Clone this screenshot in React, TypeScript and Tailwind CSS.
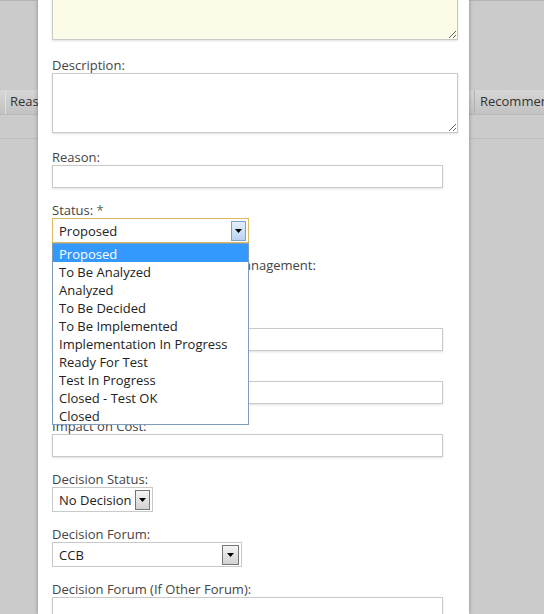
import React from 'react';

const statusOptions = [
  'Proposed',
  'To Be Analyzed',
  'Analyzed',
  'To Be Decided',
  'To Be Implemented',
  'Implementation In Progress',
  'Ready For Test',
  'Test In Progress',
  'Closed - Test OK',
  'Closed',
];

function Label({ children }: { children: React.ReactNode }) {
  return <div className="h-[17px] leading-[20px] mb-px whitespace-nowrap">{children}</div>;
}

function TextInput() {
  return (
    <div className="w-[391px] h-[23px] border border-[#c9c9c9] bg-white shadow-[0_1px_2px_rgba(0,0,0,0.12)]" />
  );
}

function Arrow({ blue, w }: { blue?: boolean; w: number }) {
  return (
    <div
      className={
        'flex items-center justify-center h-[20px] border ' +
        (blue
          ? 'bg-gradient-to-b from-[#e3eefa] to-[#b9d3ef] border-[#7fa2c8]'
          : 'bg-gradient-to-b from-[#f4f4f4] to-[#d2d2d2] border-[#757575]')
      }
      style={{ width: w }}
    >
      <svg width="7" height="4" viewBox="0 0 7 4">
        <path d="M0 0h7L3.5 4z" fill="#000" />
      </svg>
    </div>
  );
}

function Select({ value, width, arrowW, focused }: { value: string; width: number; arrowW: number; focused?: boolean }) {
  return (
    <div
      className={
        'h-[25px] flex items-center justify-between bg-white border pl-[6px] pr-[2px] ' +
        (focused ? 'border-[#deb866]' : 'border-[#c9c9c9]')
      }
      style={{ width }}
    >
      <span className="text-[#222] leading-[17px] pt-px">{value}</span>
      <Arrow blue={focused} w={arrowW} />
    </div>
  );
}

export default function App() {
  return (
    <div className="relative w-[544px] h-[614px] overflow-hidden bg-[#cbcbcb] text-[13px] text-[#444]" style={{ fontFamily: '"Open Sans", "Noto Sans", sans-serif' }}>
      {/* page behind the dialog */}
      <div className="h-[2px] border-t border-[#b3b3b3]" />
      <div className="mt-[88px] h-[25px] flex items-center justify-between bg-gradient-to-b from-[#d6d6d6] to-[#c2c2c2] border-b border-[#b9b9b9] text-[#333]">
        <div className="h-full flex items-center border-l border-[#e0e0e0] ml-[5px] pl-[4px]">Reas</div>
        <div className="h-full flex items-center border-l border-[#b0b0b0] pl-[5px] w-[70px] whitespace-nowrap overflow-hidden">Recommendation</div>
      </div>
      <div className="mt-[23px] border-t border-[#bdbdbd]" />

      {/* dialog */}
      <div className="absolute top-0 left-[38px] w-[431px] h-[614px] bg-white shadow-[0_0_4px_rgba(0,0,0,0.35)] pl-[14px]">
        <textarea className="block -mt-[20px] w-[406px] h-[60px] border border-[#c9c9c9] bg-[#fbfbe8] mb-[15px] shadow-[0_1px_2px_rgba(0,0,0,0.12)]" />

        <Label>Description:</Label>
        <textarea className="block w-[406px] h-[60px] border border-[#c9c9c9] bg-white mb-[14px] shadow-[0_1px_2px_rgba(0,0,0,0.12)]" />

        <div className="mb-3">
          <Label>Reason:</Label>
          <TextInput />
        </div>

        <div className="mb-3">
          <Label>
            Status: <span className="text-[#4f6b4f]">*</span>
          </Label>
          <div className="relative z-10">
            <Select value="Proposed" width={197} arrowW={15} focused />
            <div className="absolute top-[25px] left-0 w-[197px] bg-white border border-[#7f9db9] text-[#222]">
              {statusOptions.map((o, i) => (
                <div
                  key={o}
                  className={'h-[18px] leading-[20px] pl-[6px] whitespace-nowrap ' + (i === 0 ? 'bg-[#3399ff] text-white' : '')}
                >
                  {o}
                </div>
              ))}
            </div>
          </div>
        </div>

        <div className="mb-3">
          <Label>
            <span className="tracking-[0.12px]">Impact on Integrated Project M</span>anagement:
          </Label>
          <Select value="None" width={150} arrowW={15} />
        </div>

        <div className="mb-3">
          <Label>Impact on Schedule:</Label>
          <TextInput />
        </div>

        <div className="mb-3">
          <Label>Impact on Quality:</Label>
          <TextInput />
        </div>

        <div className="mb-3">
          <Label>Impact on Cost:</Label>
          <TextInput />
        </div>

        <div className="mb-3">
          <Label>Decision Status:</Label>
          <Select value="No Decision" width={101} arrowW={15} />
        </div>

        <div className="mb-3">
          <Label>Decision Forum:</Label>
          <Select value="CCB" width={190} arrowW={17} />
        </div>

        <div className="mb-3">
          <Label>Decision Forum (If Other Forum):</Label>
          <TextInput />
        </div>
      </div>
    </div>
  );
}
